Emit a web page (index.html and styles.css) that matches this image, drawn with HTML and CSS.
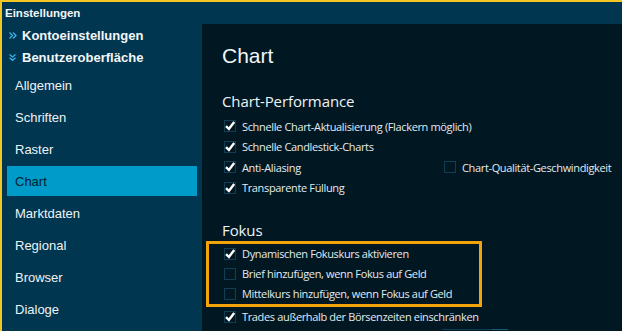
FILE: index.html
```html
<!DOCTYPE html>
<html lang="de">
<head>
<meta charset="utf-8">
<link rel="stylesheet" href="styles.css">
</head>
<body>
<div class="window">
  <div class="titlebar">Einstellungen</div>
  <div class="main">
    <nav class="sidebar">
      <div class="group">
        <svg class="chev" width="8" height="7" viewBox="0 0 8 7"><path d="M0.5 0.5 L3.5 3.5 L0.5 6.5 M4 0.5 L7 3.5 L4 6.5" fill="none" stroke="#3eb2e6" stroke-width="1.3"/></svg>
        <span>Kontoeinstellungen</span>
      </div>
      <div class="group">
        <svg class="chev" width="8" height="7" viewBox="0 0 8 7"><path d="M0.5 0.5 L3.5 3 L6.5 0.5 M0.5 3.8 L3.5 6.3 L6.5 3.8" fill="none" stroke="#3eb2e6" stroke-width="1.3"/></svg>
        <span>Benutzeroberfläche</span>
      </div>
      <ul class="menu">
        <li>Allgemein</li>
        <li>Schriften</li>
        <li>Raster</li>
        <li class="active">Chart</li>
        <li>Marktdaten</li>
        <li>Regional</li>
        <li>Browser</li>
        <li>Dialoge</li>
      </ul>
    </nav>
    <section class="content">
      <h1 class="page-title">Chart</h1>
      <h2 class="section-title">Chart-Performance</h2>
      <div class="opt"><span class="cb checked"><svg viewBox="0 0 12 12"><path d="M2 6.2 L4.9 9 L10.2 2"/></svg></span><span>Schnelle Chart-Aktualisierung (Flackern möglich)</span></div>
      <div class="opt"><span class="cb checked"><svg viewBox="0 0 12 12"><path d="M2 6.2 L4.9 9 L10.2 2"/></svg></span><span>Schnelle Candlestick-Charts</span></div>
      <div class="opt-row">
        <div class="opt"><span class="cb checked"><svg viewBox="0 0 12 12"><path d="M2 6.2 L4.9 9 L10.2 2"/></svg></span><span>Anti-Aliasing</span></div>
        <div class="opt"><span class="cb"></span><span>Chart-Qualität-Geschwindigkeit</span></div>
      </div>
      <div class="opt"><span class="cb checked"><svg viewBox="0 0 12 12"><path d="M2 6.2 L4.9 9 L10.2 2"/></svg></span><span>Transparente Füllung</span></div>

      <h2 class="section-title fokus">Fokus</h2>
      <div class="highlight">
        <div class="opt tight"><span class="cb checked"><svg viewBox="0 0 12 12"><path d="M2 6.2 L4.9 9 L10.2 2"/></svg></span><span>Dynamischen Fokuskurs aktivieren</span></div>
        <div class="opt tight"><span class="cb"></span><span>Brief hinzufügen, wenn Fokus auf Geld</span></div>
        <div class="opt tight"><span class="cb"></span><span>Mittelkurs hinzufügen, wenn Fokus auf Geld</span></div>
      </div>
      <div class="opt"><span class="cb checked"><svg viewBox="0 0 12 12"><path d="M2 6.2 L4.9 9 L10.2 2"/></svg></span><span>Trades außerhalb der Börsenzeiten einschränken</span></div>
      <div class="dropdown-edge"><span class="drop-btn"></span></div>
    </section>
  </div>
</div>
</body>
</html>
```

FILE: styles.css
```css
* { box-sizing: border-box; margin: 0; padding: 0; }
html, body { width: 622px; height: 331px; overflow: hidden; background: #00364f; }
body { font-family: "Liberation Sans", Arial, sans-serif; color: #eef3f6; }

.window {
  width: 622px;
  height: 331px;
  border-top: 2px solid #f3c623;
  border-left: 2px solid #f3c623;
  background: #00364f;
  display: flex;
  flex-direction: column;
}

.titlebar {
  height: 22px;
  padding: 4px 0 0 3px;
  font-weight: bold;
  font-size: 11.5px;
  line-height: 14px;
  color: #f4f7f9;
}

.main {
  flex: 1;
  display: flex;
  min-height: 0;
}

.sidebar {
  width: 200px;
  flex: none;
  background: #00364f;
}

.group {
  height: 22px;
  display: flex;
  align-items: center;
  padding-left: 7px;
  gap: 5px;
  font-weight: bold;
  font-size: 13px;
  color: #f4f7f9;
}
.chev { flex: none; }

.menu {
  list-style: none;
  margin-top: 2px;
  display: flex;
  flex-direction: column;
  gap: 2px;
}
.menu li {
  height: 30px;
  margin: 0 5px;
  padding-left: 8px;
  display: flex;
  align-items: center;
  font-size: 13px;
  color: #eef3f6;
}
.menu li.active {
  background: #009bc9;
  color: #02202e;
}

.content {
  flex: 1;
  background: #011823;
  padding: 20px 0 0 20px;
  color: #e4ebef;
  font-family: "Open Sans", "Noto Sans", sans-serif;
}

.page-title {
  font-family: "Liberation Sans", Arial, sans-serif;
  font-weight: normal;
  font-size: 21px;
  line-height: 24px;
  color: #f1f5f7;
}

.section-title {
  font-weight: normal;
  font-size: 15px;
  line-height: 22px;
  margin-top: 22px;
  margin-bottom: 4px;
  color: #eef3f6;
  letter-spacing: -0.1px;
}
.section-title.fokus {
  margin-top: 21.5px;
  margin-bottom: 0;
  line-height: 21px;
}

.opt {
  height: 20.5px;
  display: flex;
  align-items: center;
  gap: 6px;
  padding-left: 2px;
  font-size: 11px;
  letter-spacing: -0.35px;
  white-space: nowrap;
}
.opt.tight { height: 20px; }

.opt-row {
  display: grid;
  grid-template-columns: 220px auto;
}

.cb {
  width: 12px;
  height: 12px;
  flex: none;
  border: 1px solid #113d55;
  position: relative;
  display: inline-block;
}
.cb svg {
  position: absolute;
  left: -1px;
  top: -1px;
  width: 12px;
  height: 12px;
}
.cb svg path {
  fill: none;
  stroke: #ffffff;
  stroke-width: 2.4;
}

.highlight {
  margin-left: -16px;
  width: 276px;
  border: 3px solid #f5a30a;
  padding-left: 15px;
}
.highlight .opt { padding-left: 0; }

.dropdown-edge {
  margin-left: 220px;
  margin-top: 1.5px;
  width: 66px;
  height: 4px;
  border-top: 1px solid #0e3d55;
  display: flex;
  justify-content: flex-end;
}
.drop-btn {
  width: 16px;
  height: 4px;
  border-top: 1px solid #1a5a7a;
  margin-top: -1px;
}
```
